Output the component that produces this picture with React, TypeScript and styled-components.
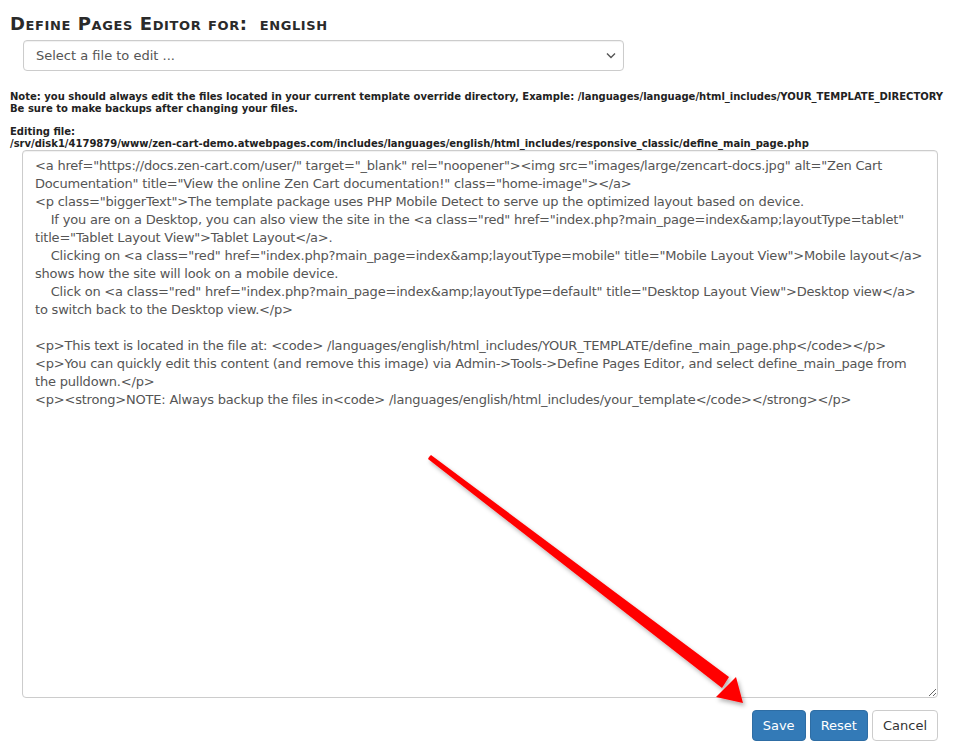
import React from "react";
import styled, { createGlobalStyle } from "styled-components";

const GlobalStyle = createGlobalStyle`
  html, body {
    margin: 0;
    padding: 0;
    background: #ffffff;
  }
  body {
    font-family: "DejaVu Sans", Verdana, sans-serif;
    color: #333;
  }
`;

const Page = styled.div`
  position: relative;
  width: 960px;
  height: 756px;
  padding: 14px 10px 0 10px;
  box-sizing: border-box;
  overflow: hidden;
`;

const Title = styled.h1`
  margin: 0 0 6px 0;
  font-size: 18px;
  font-weight: bold;
  font-variant: small-caps;
  letter-spacing: 0.6px;
  color: #2a2a2a;
  line-height: 20px;
  span {
    margin-left: 12px;
  }
`;

const SelectWrap = styled.div`
  position: relative;
  margin-left: 13px;
  width: 601px;
`;

const FileSelect = styled.select`
  appearance: none;
  width: 100%;
  height: 31px;
  padding: 0 12px;
  border: 1px solid #ccc;
  border-radius: 4px;
  background: #fff;
  font-family: "DejaVu Sans", Verdana, sans-serif;
  font-size: 13px;
  color: #555;
  box-shadow: inset 0 1px 1px rgba(0, 0, 0, 0.06);
`;

const Chevron = styled.svg`
  position: absolute;
  right: 8px;
  top: 12px;
  pointer-events: none;
`;

const Note = styled.p`
  margin: 20px 0 0 0;
  font-size: 10px;
  font-weight: bold;
  line-height: 12px;
  color: #222;
`;

const EditingLabel = styled.p`
  margin: 11px 0 0 0;
  font-size: 10px;
  font-weight: bold;
  line-height: 12px;
  color: #222;
`;

const Editor = styled.textarea`
  display: block;
  margin: 0 0 0 12px;
  width: 916px;
  height: 548px;
  box-sizing: border-box;
  padding: 6px 12px;
  border: 1px solid #ccc;
  border-radius: 4px;
  font-family: "DejaVu Sans", Verdana, sans-serif;
  font-size: 13px;
  letter-spacing: -0.2px;
  line-height: 18px;
  color: #555;
  resize: both;
  outline: none;
  box-shadow: inset 0 1px 1px rgba(0, 0, 0, 0.06);
`;

const Actions = styled.div`
  display: flex;
  justify-content: flex-end;
  gap: 4px;
  margin-top: 12px;
  width: 928px;
`;

const Button = styled.button<{ $primary?: boolean }>`
  height: 31px;
  padding: 0 10px;
  border-radius: 4px;
  font-family: "DejaVu Sans", Verdana, sans-serif;
  font-size: 13px;
  cursor: pointer;
  border: 1px solid ${(p) => (p.$primary ? "#2e6da4" : "#ccc")};
  background: ${(p) => (p.$primary ? "#337ab7" : "#fff")};
  color: ${(p) => (p.$primary ? "#fff" : "#333")};
`;

const Arrow = styled.svg`
  position: absolute;
  left: 0;
  top: 0;
  pointer-events: none;
`;

const content = `<a href="https://docs.zen-cart.com/user/" target="_blank" rel="noopener"><img src="images/large/zencart-docs.jpg" alt="Zen Cart Documentation" title="View the online Zen Cart documentation!" class="home-image"></a>
<p class="biggerText">The template package uses PHP Mobile Detect to serve up the optimized layout based on device.
    If you are on a Desktop, you can also view the site in the <a class="red" href="index.php?main_page=index&amp;layoutType=tablet" title="Tablet Layout View">Tablet Layout</a>.
    Clicking on <a class="red" href="index.php?main_page=index&amp;layoutType=mobile" title="Mobile Layout View">Mobile layout</a> shows how the site will look on a mobile device.
    Click on <a class="red" href="index.php?main_page=index&amp;layoutType=default" title="Desktop Layout View">Desktop view</a> to switch back to the Desktop view.</p>

<p>This text is located in the file at: <code> /languages/english/html_includes/YOUR_TEMPLATE/define_main_page.php</code></p>
<p>You can quickly edit this content (and remove this image) via Admin->Tools->Define Pages Editor, and select define_main_page from the pulldown.</p>
<p><strong>NOTE: Always backup the files in<code> /languages/english/html_includes/your_template</code></strong></p>`;

export default function App() {
  return (
    <>
      <GlobalStyle />
      <Page>
        <Title>
          Define Pages Editor for:<span>english</span>
        </Title>
        <SelectWrap>
          <FileSelect defaultValue="">
            <option value="">Select a file to edit ...</option>
          </FileSelect>
          <Chevron width="10" height="7" viewBox="0 0 10 7">
            <path d="M1 1.5 L5 5.5 L9 1.5" fill="none" stroke="#555" strokeWidth="1.4" />
          </Chevron>
        </SelectWrap>
        <Note>
          Note: you should always edit the files located in your current template override directory, Example: /languages/language/html_includes/YOUR_TEMPLATE_DIRECTORY
          <br />
          Be sure to make backups after changing your files.
        </Note>
        <EditingLabel>
          Editing file:
          <br />
          /srv/disk1/4179879/www/zen-cart-demo.atwebpages.com/includes/languages/english/html_includes/responsive_classic/define_main_page.php
        </EditingLabel>
        <Editor defaultValue={content} spellCheck={false} />
        <Actions>
          <Button $primary>Save</Button>
          <Button $primary>Reset</Button>
          <Button>Cancel</Button>
        </Actions>
        <Arrow width="960" height="756" viewBox="0 0 960 756">
          <defs>
            <filter id="sh" x="-10%" y="-10%" width="120%" height="120%">
              <feDropShadow dx="2" dy="3" stdDeviation="2" floodColor="#000" floodOpacity="0.3" />
            </filter>
          </defs>
          <g filter="url(#sh)" fill="#ff0000">
            <polygon points="429,457 431,455 729,677 722,688 428,459" />
            <polygon points="736,677 743,703 716,697" />
          </g>
        </Arrow>
      </Page>
    </>
  );
}
